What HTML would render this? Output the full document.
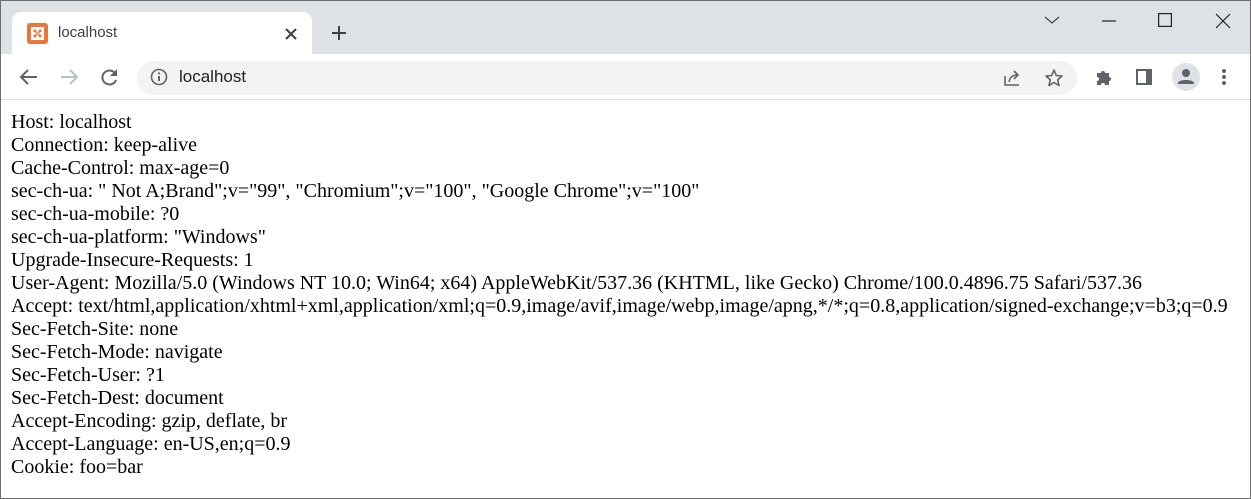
<!DOCTYPE html>
<html><head><style>
*{margin:0;padding:0;box-sizing:border-box}
body{width:1251px;height:499px;overflow:hidden;background:#fff;font-family:"Liberation Sans",sans-serif;position:relative;border:1px solid #6e6e6e}
.tabbar{position:absolute;left:0;top:0;width:1249px;height:53px;background:#dee1e6}
.tab{position:absolute;left:11px;top:11px;width:300px;height:42px;background:#fff;border-radius:9px 9px 0 0}
.fav{position:absolute;left:15px;top:11px;width:21px;height:21px;background:#e9773a;border-radius:3px}
.tabt{position:absolute;left:46px;top:12px;font-size:15px;color:#3c4043}
.toolbar{position:absolute;left:0;top:53px;width:1249px;height:46px;background:#fff;border-bottom:1px solid #dadce0}
.omni{position:absolute;left:136px;top:7px;width:940px;height:34px;background:#f1f3f4;border-radius:17px}
.url{position:absolute;left:42px;top:6px;font-size:17px;color:#202124}
svg{position:absolute}
.content{position:absolute;left:10px;top:110px;font-family:"Liberation Serif",serif;font-size:20px;line-height:23px;color:#000;white-space:nowrap}
</style></head><body>
<div class="tabbar">
 <div class="tab">
  <div class="fav"><svg width="21" height="21" viewBox="0 0 20 20"><path d="M5 5h4l1 2 1-2h4v4l-2 1 2 1v4h-4l-1-2-1 2H5v-4l2-1-2-1z" fill="none" stroke="#fff" stroke-width="2.4"/></svg></div>
  <div class="tabt">localhost</div>
  <svg style="left:272px;top:15px" width="14" height="14"><path d="M2 2L12 12M12 2L2 12" stroke="#3c4043" stroke-width="2"/></svg>
 </div>
 <svg style="left:330px;top:24px" width="16" height="16"><path d="M8 1V15M1 8H15" stroke="#3c4043" stroke-width="2"/></svg>
 <svg style="left:1043px;top:14px" width="16" height="10"><path d="M1 2L8 8L15 2" fill="none" stroke="#444" stroke-width="1.2"/></svg>
 <svg style="left:1100px;top:19px" width="16" height="2"><path d="M1 1H15" stroke="#222" stroke-width="1.2"/></svg>
 <svg style="left:1157px;top:12px" width="14" height="14"><rect x="0.6" y="0.6" width="12.8" height="12.8" fill="none" stroke="#222" stroke-width="1.2"/></svg>
 <svg style="left:1214px;top:12px" width="16" height="16"><path d="M1 1L15 15M15 1L1 15" stroke="#222" stroke-width="1.2"/></svg>
</div>
<div class="toolbar">
 <svg style="left:18px;top:14px" width="20" height="18"><path d="M18 9H3M9 2L2 9L9 16" fill="none" stroke="#5f6368" stroke-width="2"/></svg>
 <svg style="left:58px;top:14px" width="20" height="18"><path d="M2 9H17M11 2L18 9L11 16" fill="none" stroke="#bcc0c4" stroke-width="2"/></svg>
 <svg style="left:99px;top:13px" width="20" height="20"><path d="M16 8A7 7 0 1 0 16 13" fill="none" stroke="#5f6368" stroke-width="2"/><path d="M17 2V9H10Z" fill="#5f6368"/></svg>
 <div class="omni">
  <svg style="left:13px;top:7px" width="18" height="18"><circle cx="9" cy="9" r="7.5" fill="none" stroke="#5f6368" stroke-width="1.6"/><path d="M9 8V13" stroke="#5f6368" stroke-width="2"/><circle cx="9" cy="5.3" r="1.1" fill="#5f6368"/></svg>
  <div class="url">localhost</div>
  <svg style="left:866px;top:8px" width="20" height="18"><path d="M2 7V16H16M6 13C7 8 10 6 14 6M11 2L15 6L11 10" fill="none" stroke="#5f6368" stroke-width="1.6"/></svg>
  <svg style="left:907px;top:7px" width="20" height="20"><path d="M10 2L12.3 7.5L18 8L13.7 11.8L15 17.5L10 14.5L5 17.5L6.3 11.8L2 8L7.7 7.5Z" fill="none" stroke="#5f6368" stroke-width="1.6" stroke-linejoin="round"/></svg>
 </div>
 <svg style="left:1094px;top:14px" width="18" height="18"><path d="M2 5H6A2 2 0 0 1 10 5H14V9A2 2 0 0 1 14 13V17H10A2 2 0 0 0 6 17H2V13A2 2 0 0 0 2 9Z" fill="#5f6368"/></svg>
 <svg style="left:1134px;top:14px" width="18" height="18"><rect x="1" y="1" width="16" height="16" fill="#5f6368"/><rect x="3" y="3" width="8" height="12" fill="#fff"/></svg>
 <svg style="left:1170px;top:8px" width="30" height="30"><circle cx="15" cy="15" r="14" fill="#dee1e6"/><circle cx="15" cy="11" r="4" fill="#5f6368"/><path d="M7 21C8 17 22 17 23 21V22H7Z" fill="#5f6368"/></svg>
 <svg style="left:1220px;top:14px" width="6" height="18"><circle cx="3" cy="3" r="2" fill="#5f6368"/><circle cx="3" cy="9" r="2" fill="#5f6368"/><circle cx="3" cy="15" r="2" fill="#5f6368"/></svg>
</div>
<div class="content">
Host: localhost<br>
Connection: keep-alive<br>
Cache-Control: max-age=0<br>
sec-ch-ua: " Not A;Brand";v="99", "Chromium";v="100", "Google Chrome";v="100"<br>
sec-ch-ua-mobile: ?0<br>
sec-ch-ua-platform: "Windows"<br>
Upgrade-Insecure-Requests: 1<br>
User-Agent: Mozilla/5.0 (Windows NT 10.0; Win64; x64) AppleWebKit/537.36 (KHTML, like Gecko) Chrome/100.0.4896.75 Safari/537.36<br>
Accept: text/html,application/xhtml+xml,application/xml;q=0.9,image/avif,image/webp,image/apng,*/*;q=0.8,application/signed-exchange;v=b3;q=0.9<br>
Sec-Fetch-Site: none<br>
Sec-Fetch-Mode: navigate<br>
Sec-Fetch-User: ?1<br>
Sec-Fetch-Dest: document<br>
Accept-Encoding: gzip, deflate, br<br>
Accept-Language: en-US,en;q=0.9<br>
Cookie: foo=bar
</div>
</body></html>
